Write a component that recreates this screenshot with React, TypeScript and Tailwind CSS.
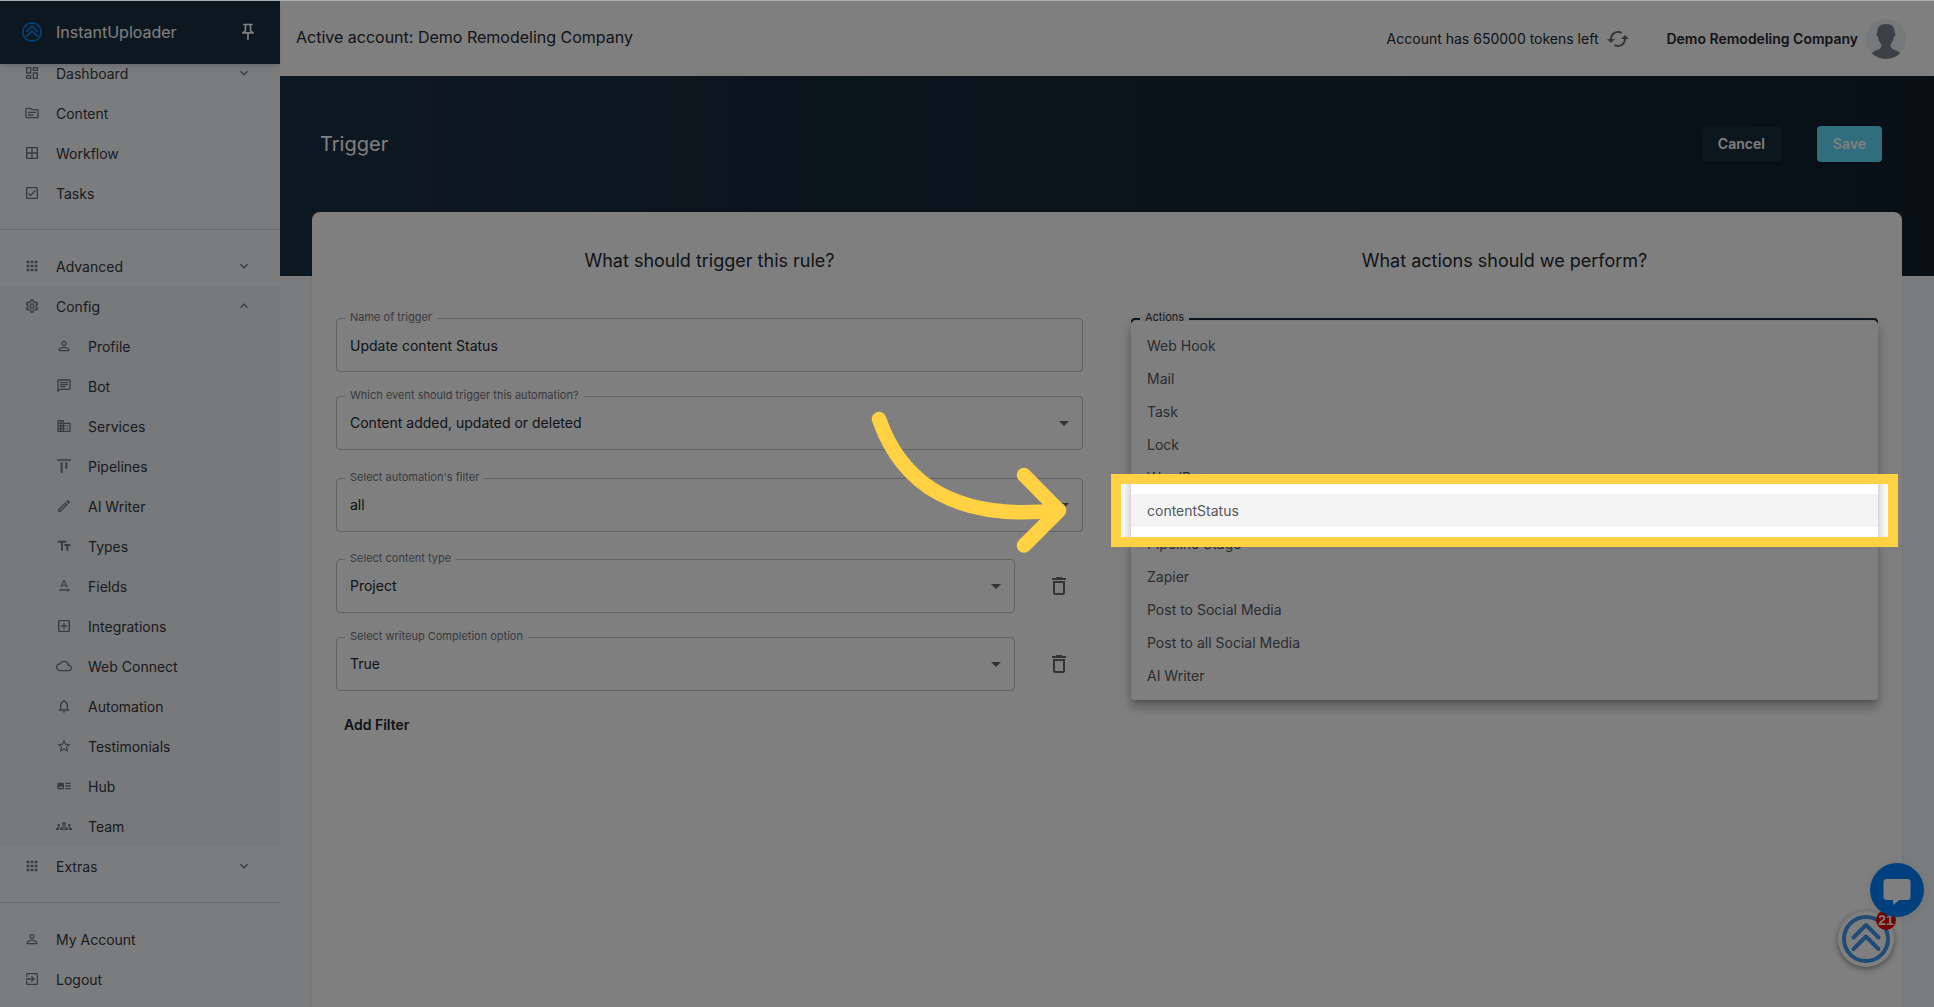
import React from 'react';
import type { IconType } from 'react-icons';
import {
  MdAlignVerticalTop,
  MdApps,
  MdArrowDropDown,
  MdArtTrack,
  MdBorderAll,
  MdBusiness,
  MdCached,
  MdExpandLess,
  MdExpandMore,
  MdNotificationsNone,
  MdOutlineAddBox,
  MdOutlineChat,
  MdOutlineCheckBox,
  MdOutlineCloud,
  MdOutlineDashboard,
  MdOutlineDelete,
  MdOutlineEdit,
  MdOutlineExitToApp,
  MdOutlineGroups,
  MdOutlinePushPin,
  MdOutlineSettings,
  MdOutlineTopic,
  MdPersonOutline,
  MdStarOutline,
  MdTextFields,
  MdTextRotationNone,
} from 'react-icons/md';

interface NavEntry {
  label: string;
  icon: IconType;
  chevron?: 'up' | 'down';
}

const mainNav: NavEntry[] = [
  { label: 'Dashboard', icon: MdOutlineDashboard, chevron: 'down' },
  { label: 'Content', icon: MdOutlineTopic },
  { label: 'Workflow', icon: MdBorderAll },
  { label: 'Tasks', icon: MdOutlineCheckBox },
];

const configNav: NavEntry[] = [
  { label: 'Profile', icon: MdPersonOutline },
  { label: 'Bot', icon: MdOutlineChat },
  { label: 'Services', icon: MdBusiness },
  { label: 'Pipelines', icon: MdAlignVerticalTop },
  { label: 'AI Writer', icon: MdOutlineEdit },
  { label: 'Types', icon: MdTextFields },
  { label: 'Fields', icon: MdTextRotationNone },
  { label: 'Integrations', icon: MdOutlineAddBox },
  { label: 'Web Connect', icon: MdOutlineCloud },
  { label: 'Automation', icon: MdNotificationsNone },
  { label: 'Testimonials', icon: MdStarOutline },
  { label: 'Hub', icon: MdArtTrack },
  { label: 'Team', icon: MdOutlineGroups },
];

const actions = [
  'Web Hook',
  'Mail',
  'Task',
  'Lock',
  'WordPress',
  'contentStatus',
  'Pipeline Stage',
  'Zapier',
  'Post to Social Media',
  'Post to all Social Media',
  'AI Writer',
];

const Logo: React.FC<{ className: string }> = ({ className }) => (
  <svg viewBox="0 0 48 48" fill="none" stroke="currentColor" strokeWidth="4" strokeLinecap="round" strokeLinejoin="round" className={className}>
    <circle cx="24" cy="24" r="22" />
    <path d="M11.5 22.5 24 10l12.5 12.5M11.5 34 24 21.5 36.5 34" />
  </svg>
);

const NavItem: React.FC<{ entry: NavEntry; nested?: boolean }> = ({ entry, nested }) => {
  const Icon = entry.icon;
  const Chevron = entry.chevron === 'up' ? MdExpandLess : MdExpandMore;
  return (
    <a href="#" className={`flex h-10 items-center gap-4 pr-7 text-sm text-[#33373d] ${nested ? 'pl-14' : 'pl-6'}`}>
      <Icon className="size-4 text-[#73777c]" />
      <span className="flex-1 pt-0.5">{entry.label}</span>
      {entry.chevron && <Chevron className="size-4 text-[#73777c]" />}
    </a>
  );
};

const Sidebar: React.FC = () => (
  <aside className="relative z-0 flex w-[280px] shrink-0 flex-col bg-[#f7f9fc]">
    <div className="relative z-10 flex h-[63px] items-center gap-[14px] bg-[#1b2f40] px-[22px] pb-0.5 shadow-md">
      <Logo className="size-5 text-[#0a84f0]" />
      <span className="flex-1 text-base text-white">InstantUploader</span>
      <button type="button" aria-label="Pin sidebar">
        <MdOutlinePushPin className="size-5 text-white" />
      </button>
    </div>
    <nav className="-mt-[11px]">
      {mainNav.map((entry) => (
        <NavItem key={entry.label} entry={entry} />
      ))}
      <hr className="my-4 border-[#d5d8dc]" />
      <NavItem entry={{ label: 'Advanced', icon: MdApps, chevron: 'down' }} />
      <div className="bg-[#f0f2f5]">
        <NavItem entry={{ label: 'Config', icon: MdOutlineSettings, chevron: 'up' }} />
        {configNav.map((entry) => (
          <NavItem key={entry.label} entry={entry} nested />
        ))}
      </div>
      <NavItem entry={{ label: 'Extras', icon: MdApps, chevron: 'down' }} />
      <hr className="my-4 border-[#d5d8dc]" />
      <NavItem entry={{ label: 'My Account', icon: MdPersonOutline }} />
      <NavItem entry={{ label: 'Logout', icon: MdOutlineExitToApp }} />
    </nav>
  </aside>
);

const Avatar: React.FC = () => (
  <svg viewBox="0 0 40 40" className="size-10 rounded-full bg-[#eff0f3]">
    <path
      fill="#79818b"
      d="M20 5c-6 0-8.800 3-8.600 8.500-.8.200-.9 1.300-.5 2.500.3 1.100.7 2 1.400 2.200.4 3.300 1.300 5 2.900 6.600.5 3.200-.2 4.700-3.200 5.900-3 1.200-5.300 2-6.800 4.100C8.800 38 14 40 20 40s11.200-2 14.800-5.200c-1.500-2.100-3.800-2.900-6.800-4.100-3-1.200-3.700-2.700-3.200-5.900 1.600-1.600 2.500-3.300 2.900-6.600.7-.2 1.100-1.100 1.400-2.200.4-1.200.3-2.300-.5-2.500C28.800 8 26 5 20 5z"
    />
  </svg>
);

const Header: React.FC = () => (
  <header className="flex h-[75px] items-center bg-white pr-7 pl-4 text-[#22272e]">
    <h1 className="flex-1 pb-1 text-base">Active account: Demo Remodeling Company</h1>
    <span className="text-sm">Account has 650000 tokens left</span>
    <button type="button" aria-label="Refresh tokens" className="ml-2">
      <MdCached className="size-6 text-[#6b7077]" />
    </button>
    <span className="ml-9 text-sm font-semibold">Demo Remodeling Company</span>
    <span className="ml-2">
      <Avatar />
    </span>
  </header>
);

interface FieldProps {
  id: string;
  label: string;
  value: string;
  text?: boolean;
}

const Field: React.FC<FieldProps> = ({ id, label, value, text }) => (
  <div className="relative flex-1">
    <label htmlFor={id} className="absolute -top-[7px] left-[9px] bg-white px-[5px] text-[11px] leading-3 text-[#70767f]">
      {label}
    </label>
    {text ? (
      <input id={id} defaultValue={value} className="h-[54px] w-full rounded border border-[#c4c4c4] px-[13px] text-sm text-[#22272e] outline-none" />
    ) : (
      <>
        <select id={id} defaultValue={value} className="h-[54px] w-full appearance-none rounded border border-[#c4c4c4] px-[13px] text-sm text-[#22272e] outline-none">
          <option>{value}</option>
        </select>
        <MdArrowDropDown className="pointer-events-none absolute top-[15px] right-[7px] size-6 text-[#62666b]" />
      </>
    )}
  </div>
);

const FilterRow: React.FC<FieldProps> = (props) => (
  <div className="flex items-center pr-3">
    <Field {...props} />
    <button type="button" aria-label={`Delete ${props.label}`} className="ml-8">
      <MdOutlineDelete className="size-6 text-[#62666b]" />
    </button>
  </div>
);

/* Yellow frame with the page dimmed around it */
const Spotlight: React.FC = () => (
  <div className="pointer-events-none absolute -inset-5 border-10 border-[#ffd143] shadow-[0_0_0_9999px_rgba(0,0,0,0.5)]">
    <svg
      viewBox="0 0 202 146"
      fill="none"
      stroke="#ffd143"
      strokeWidth="14.5"
      strokeLinecap="round"
      strokeLinejoin="round"
      className="absolute -top-[75px] -left-[252px] h-[146px] w-[202px]"
    >
      <path d="M10 10C33 76 88 113 190 101" />
      <path d="M155 66 190 101.5 155 136.5" />
    </svg>
  </div>
);

const ActionsMenu: React.FC = () => (
  <div className="relative">
    <button id="actions" type="button" aria-haspopup="listbox" aria-expanded="true" className="block h-[54px] w-full rounded border-2 border-[#1b2f40]" />
    <label htmlFor="actions" className="absolute -top-[7px] left-[9px] bg-white px-[5px] text-[11px] leading-3 text-[#33373d]">
      Actions
    </label>
    <ul
      role="listbox"
      aria-label="Actions"
      className="absolute inset-x-0 top-[3px] z-50 rounded bg-white py-2 shadow-[0_5px_5px_-3px_rgba(0,0,0,0.2),0_8px_10px_1px_rgba(0,0,0,0.14),0_3px_14px_2px_rgba(0,0,0,0.12)]"
    >
      {actions.map((action) => {
        const selected = action === 'contentStatus';
        return (
          <li
            key={action}
            role="option"
            aria-selected={selected}
            className={`flex h-[33px] items-center px-4 text-sm text-[#55585c] ${selected ? 'relative z-10 bg-[#f4f4f4]' : ''}`}
          >
            {action}
            {selected && <Spotlight />}
          </li>
        );
      })}
    </ul>
  </div>
);

const ChatWidgets: React.FC = () => (
  <>
    <button type="button" aria-label="Notifications, 21 unread" className="fixed right-10 bottom-10 z-10 flex size-14 items-center justify-center rounded-full bg-white shadow-[0_2px_6px_rgba(0,0,0,0.45)]">
      <Logo className="size-12 text-[#3f97ea]" />
      <span className="absolute -top-px -right-[2px] flex size-5 items-center justify-center rounded-full bg-[#f00000] font-['Liberation_Sans'] text-sm font-bold text-white">21</span>
    </button>
    <button type="button" aria-label="Open chat" className="fixed right-[10px] bottom-[90px] z-10 flex size-[54px] items-center justify-center rounded-full bg-[#0080ff] shadow-[0_1px_12px_rgba(0,0,0,0.1)]">
      <svg viewBox="0 0 28 28" className="mt-1 size-7 fill-white">
        <path d="M3.5 1h21A3 3 0 0 1 27.500 4v15a3 3 0 0 1-3 3H16.500L10 27v-5H3.500a3 3 0 0 1-3-3V4a3 3 0 0 1 3-3z" />
      </svg>
    </button>
  </>
);

export default function App() {
  return (
    <div className="flex min-h-screen overflow-hidden border-t border-[#a9abad] bg-[#f7f9fc] font-[Inter,sans-serif]">
      <Sidebar />
      <main className="flex min-w-0 flex-1 flex-col">
        <Header />
        <div className="h-[200px] bg-gradient-to-r from-[#1b2f40] to-[#10212d]">
          <div className="flex h-[136px] items-center pr-[52px] pl-10">
            <h2 className="flex-1 text-xl text-white">Trigger</h2>
            <button type="button" className="h-9 rounded bg-[#192d3b] px-4 text-sm font-semibold text-white shadow">
              Cancel
            </button>
            <button type="button" className="ml-9 h-9 rounded bg-[#61dafb] px-4 text-sm font-semibold text-white shadow">
              Save
            </button>
          </div>
        </div>
        <div className="mx-8 -mt-16 grid flex-1 grid-cols-2 content-start gap-12 rounded-t-lg bg-white px-6 pt-[37px] shadow">
          <section>
            <h3 className="text-center text-lg leading-6 text-[#22272e]">What should trigger this rule?</h3>
            <div className="mt-[45px] flex flex-col">
              <Field id="trigger-name" label="Name of trigger" value="Update content Status" text />
              <div className="mt-6">
                <Field id="event" label="Which event should trigger this automation?" value="Content added, updated or deleted" />
              </div>
              <div className="mt-7">
                <Field id="filter" label="Select automation's filter" value="all" />
              </div>
              <div className="mt-[27px] flex flex-col gap-6">
                <FilterRow id="content-type" label="Select content type" value="Project" />
                <FilterRow id="completion" label="Select writeup Completion option" value="True" />
              </div>
            </div>
            <button type="button" className="mt-4 h-9 px-2 text-sm font-semibold text-[#22272e]">
              Add Filter
            </button>
          </section>
          <section>
            <h3 className="mb-[45px] text-center text-lg leading-6 text-[#22272e]">What actions should we perform?</h3>
            <ActionsMenu />
          </section>
        </div>
      </main>
      <ChatWidgets />
    </div>
  );
}
